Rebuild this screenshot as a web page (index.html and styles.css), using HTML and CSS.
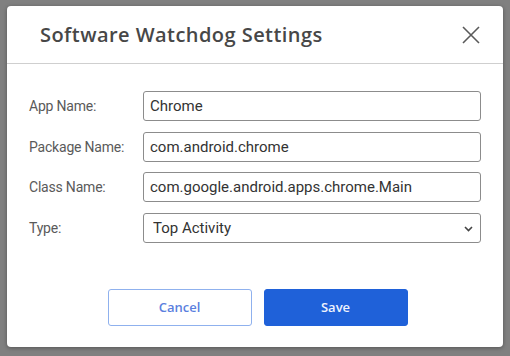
FILE: index.html
```html
<!DOCTYPE html>
<html lang="en">

<head>
    <meta charset="UTF-8">
    <meta name="viewport" content="width=device-width, initial-scale=1.0">
    <title>Software Watchdog Settings</title>
    <link rel="stylesheet" href="styles.css">
</head>

<body>
    <div class="fondo">
        <div class="dialogo">
            <div class="cabecera">
                <h1 class="titulo">Software Watchdog Settings</h1>
                <button class="cerrar" aria-label="Close">
                    <svg width="18" height="18" viewBox="0 0 18 18">
                        <path d="M1 1 L17 17 M17 1 L1 17" stroke="#5a5a5a" stroke-width="1.6" fill="none" />
                    </svg>
                </button>
            </div>
            <div class="cuerpo">
                <div class="fila">
                    <label class="etiqueta">App Name:</label>
                    <input class="campo" type="text" value="Chrome">
                </div>
                <div class="fila">
                    <label class="etiqueta">Package Name:</label>
                    <input class="campo" type="text" value="com.android.chrome">
                </div>
                <div class="fila">
                    <label class="etiqueta">Class Name:</label>
                    <input class="campo" type="text" value="com.google.android.apps.chrome.Main">
                </div>
                <div class="fila">
                    <label class="etiqueta">Type:</label>
                    <div class="selector">
                        <select class="campo">
                            <option>Top Activity</option>
                        </select>
                        <svg class="flecha" width="9" height="6" viewBox="0 0 9 6">
                            <path d="M1 1 L4.5 4.5 L8 1" stroke="#444" stroke-width="1.6" fill="none" />
                        </svg>
                    </div>
                </div>
            </div>
            <div class="pie">
                <button class="boton cancelar">Cancel</button>
                <button class="boton guardar">Save</button>
            </div>
        </div>
    </div>
</body>

</html>
```

FILE: styles.css
```css
html {
    font-family: Roboto, 'Liberation Sans', Arial, sans-serif;
}

body {
    margin: 0;
    padding: 0;
    background-color: rgb(128, 128, 128);
}

.fondo {
    height: 356px;
    padding: 6px 7px 0 7px;
    box-sizing: border-box;
}

.dialogo {
    width: 496px;
    height: 341px;
    background-color: white;
    border-radius: 4px;
    box-shadow: 0 1px 4px rgba(0, 0, 0, 0.35);
    display: flex;
    flex-direction: column;
}

.cabecera {
    height: 57px;
    border-bottom: 1px solid #cfcfcf;
    display: flex;
    align-items: center;
    justify-content: space-between;
    padding: 0 23px 0 33px;
}

.titulo {
    margin: 0;
    font-family: 'Open Sans', sans-serif;
    font-size: 20px;
    font-weight: 600;
    color: #474747;
    letter-spacing: 0.45px;
}

.cerrar {
    background: none;
    border: none;
    padding: 0;
    width: 18px;
    height: 18px;
    cursor: pointer;
}

.cuerpo {
    padding: 27px 22px 0 22px;
    display: flex;
    flex-direction: column;
    gap: 10.5px;
}

.fila {
    display: flex;
    align-items: center;
    height: 30px;
}

.etiqueta {
    width: 114px;
    flex-shrink: 0;
    font-size: 14px;
    color: #5a5a5a;
    letter-spacing: -0.2px;
}

.campo {
    width: 338px;
    height: 30px;
    box-sizing: border-box;
    border: 1px solid #8c8c8c;
    border-radius: 3px;
    padding: 0 6px;
    font-family: Roboto, sans-serif;
    font-size: 15px;
    color: #333;
    background-color: white;
    outline: none;
}

.selector {
    position: relative;
}

.selector select {
    appearance: none;
    -webkit-appearance: none;
    padding-left: 9px;
}

.flecha {
    position: absolute;
    right: 8px;
    top: 13px;
    pointer-events: none;
}

.pie {
    display: flex;
    justify-content: center;
    gap: 12px;
    margin-top: 46px;
    padding-left: 5px;
}

.boton {
    width: 144px;
    height: 37px;
    border-radius: 3px;
    font-family: 'Open Sans', sans-serif;
    font-size: 13px;
    font-weight: 600;
    cursor: pointer;
}

.cancelar {
    background-color: white;
    border: 1.5px solid #8fb1ee;
    color: #5b7fde;
}

.guardar {
    background-color: #1f61d9;
    border: 1px solid #1f61d9;
    color: #eef3fd;
}
```
